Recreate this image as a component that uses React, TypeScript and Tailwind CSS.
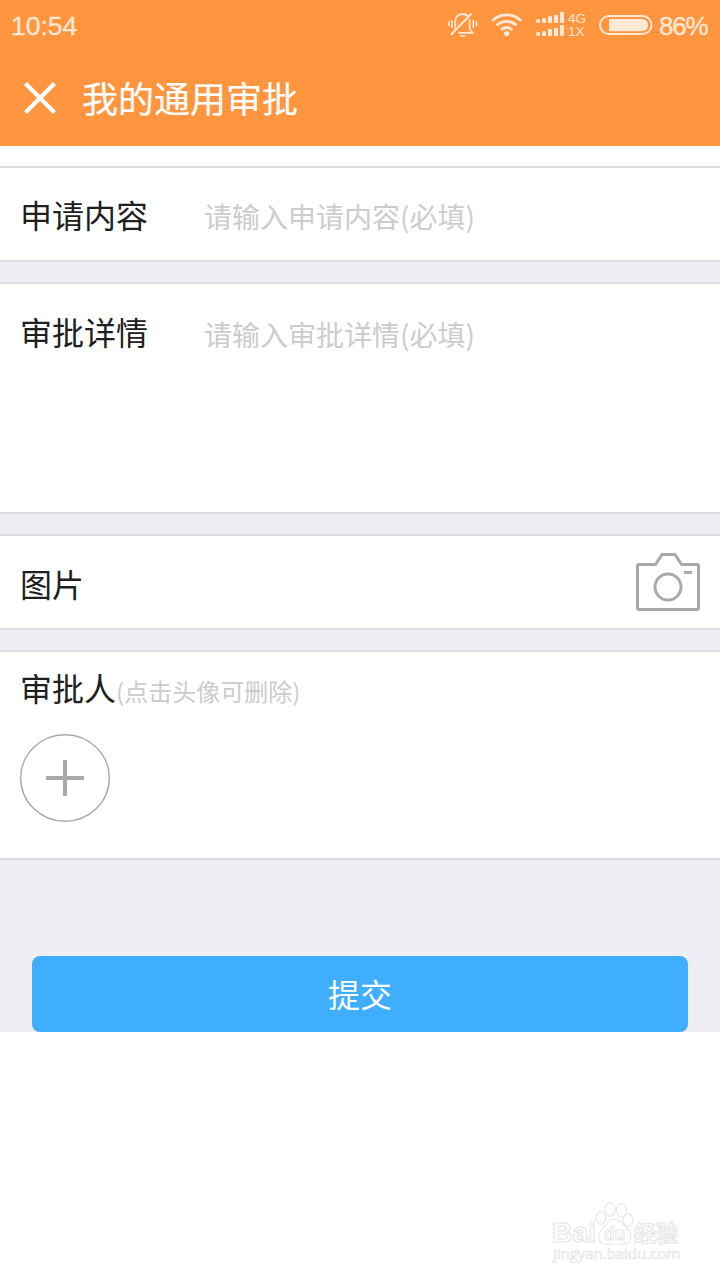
import type { ReactNode } from "react";

const cjk = "font-['Noto_Sans_CJK_SC',sans-serif]";

function MutedBell() {
  return (
    <svg className="block" width="30" height="26" viewBox="0 0 30 26" fill="none" stroke="#ffe8d6" strokeWidth="1.8">
      <path d="M.9 9.300v5M4 8v8M25.300 8v8M28.400 9.300v5" strokeWidth="1.600" />
      <path d="M7.200 16.500V9.500C7.200 5 10 2 14.600 2c2.300 0 4 .8 5.200 2" />
      <path d="M21.600 7v8.500c0 2.200 1 3.400 3 5.300H10.500" />
      <path d="M23.600 1.500L2.900 22.700" strokeWidth="2" />
      <path d="M11 23.200h7l-1.800 1.600h-3.400z" fill="#ffe8d6" stroke="none" />
    </svg>
  );
}

function Wifi() {
  return (
    <svg className="block" width="32" height="24" viewBox="0 0 32 24" fill="none" stroke="#ffe8d6" strokeWidth="2.900">
      <path d="M1.300 7.800C9.300-.1 22-.1 30 7.800" />
      <path d="M5.500 12.600C11 7 20.200 7 25.700 12.600" />
      <path d="M10 17c3.200-3.300 8.200-3.300 11.400 0" />
      <circle cx="15.700" cy="20.600" r="2.700" fill="#ffe8d6" stroke="none" />
    </svg>
  );
}

function SignalRow() {
  return (
    <svg className="block" width="29" height="12" viewBox="0 0 29 12" fill="#ffe8d6">
      <rect x="0" y="7" width="4" height="4" rx="1.500" />
      <rect x="6" y="6" width="4" height="5" rx="1" />
      <rect x="12" y="4" width="4" height="7" rx="1" />
      <rect x="18" y="2.700" width="4" height="8.300" rx="1" />
      <rect x="24" y="0" width="4" height="11" rx="1" />
    </svg>
  );
}

function Battery() {
  return (
    <svg className="block" width="54" height="22" viewBox="0 0 54 22">
      <rect x="1" y="2" width="51.500" height="18" rx="9" fill="none" stroke="#ffe8d6" strokeWidth="2" />
      <path d="M10 5h32.500q6.500 0 6.500 6.100t-6.500 6.100H10z" fill="#ffe8d6" />
    </svg>
  );
}

function StatusBar() {
  return (
    <div className="flex h-[50px] items-center pl-[11px] pr-[12px] font-['Liberation_Sans',sans-serif] text-[26.500px] leading-[30px] text-[#ffe8d6]">
      <span className="pt-[2px] [-webkit-text-stroke:0.300px_#ffe8d6]">10:54</span>
      <div className="ml-auto flex items-center">
        <MutedBell />
        <div className="ml-[13px]"><Wifi /></div>
        <div className="ml-[13px] flex flex-col gap-[1px] pb-[2px]">
          <SignalRow />
          <SignalRow />
        </div>
        <div className="ml-[3px] w-[20px] font-['Liberation_Sans',sans-serif] text-[13.500px] leading-[13px]">
          <div>4G</div>
          <div>1X</div>
        </div>
        <div className="ml-[11px]"><Battery /></div>
        <span className="ml-[6px] w-[49px] pt-[2px] text-[26px] tracking-[-1.200px] [-webkit-text-stroke:0.300px_#ffe8d6]">86%</span>
      </div>
    </div>
  );
}

function Panel({ className, children }: { className: string; children: ReactNode }) {
  return <section className={`flex border-y-2 border-[#dcdcdc] bg-white px-5 ${className}`}>{children}</section>;
}

function Field({ label, placeholder, offset }: { label: string; placeholder: string; offset: string }) {
  return (
    <>
      <span className="w-[184px] text-[32px] leading-[48px]">{label}</span>
      <span className={`text-[28px] leading-[48px] text-[#cccccc] ${offset}`}>{placeholder}</span>
    </>
  );
}

function Camera() {
  return (
    <svg width="64" height="58" viewBox="0 0 64 58" fill="none" stroke="#a9a9a9" strokeWidth="3">
      <path d="M3 11.500h16.500L26 1.500h13l6.500 10H61q1.500 0 1.500 1.500v42q0 1.500-1.500 1.500H3q-1.500 0-1.500-1.500V13q0-1.500 1.500-1.500z" />
      <circle cx="32" cy="34" r="13" />
      <path d="M48 19.500h8" />
    </svg>
  );
}

function Watermark() {
  return (
    <svg width="132" height="66" viewBox="0 0 132 66" fill="#ffffff" stroke="#e6e6e6" strokeWidth="1.100">
      <g fontFamily="Liberation Sans, sans-serif" fontWeight="bold">
        <text x="2" y="39.500" fontSize="28" textLength="44" lengthAdjust="spacingAndGlyphs">Bai</text>
        <text x="3" y="56.500" fontFamily="Open Sans, sans-serif" fontSize="14" fontWeight="normal" strokeWidth="0.700" textLength="127" lengthAdjust="spacingAndGlyphs">jingyan.baidu.com</text>
      </g>
      <ellipse cx="51" cy="16" rx="5" ry="6.300" />
      <ellipse cx="60" cy="7.500" rx="5" ry="6.800" />
      <ellipse cx="71.500" cy="8.500" rx="5" ry="6.800" />
      <ellipse cx="78" cy="18" rx="5" ry="6.300" />
      <path d="M64.500 17c-5 0-7 5-10.500 8.500-9 8-5 18.500 4 16.500h13c10 1 14-8.500 5-16.500-3.500-3.500-6-8.500-11.500-8.500z" />
      <text x="54" y="38" fontFamily="Liberation Sans, sans-serif" fontSize="18" fontWeight="bold" strokeWidth="0.900" textLength="21" lengthAdjust="spacingAndGlyphs">du</text>
      <text x="84" y="38.500" fontFamily="Noto Sans CJK SC, sans-serif" fontSize="22" fontWeight="bold">经验</text>
    </svg>
  );
}

export default function App() {
  return (
    <div className={`flex h-[1280px] w-[720px] flex-col overflow-hidden bg-white text-[#202020] ${cjk}`}>
      <header className="h-[146px] shrink-0 bg-[#ff953f]">
        <StatusBar />
        <div className="flex h-24 items-center pl-6">
          <svg width="32" height="32" viewBox="0 0 32 32" stroke="#ffffff" strokeWidth="4.200">
            <path d="M1.500 1.500l29 29M30.500 1.500l-29 29" />
          </svg>
          <h1 className="ml-[26px] pb-[3px] text-[36px] font-normal leading-[54px] text-white [-webkit-text-stroke:0.200px_white]">我的通用审批</h1>
        </div>
      </header>
      <main className="flex shrink-0 flex-col bg-white pt-5">
        <div className="flex h-[866px] flex-col gap-5 bg-[#efeef4]">
          <Panel className="h-24 items-center">
            <Field label="申请内容" placeholder="请输入申请内容(必填)" offset="pt-[3px]" />
          </Panel>
          <Panel className="h-[232px] items-start pt-[23px]">
            <Field label="审批详情" placeholder="请输入审批详情(必填)" offset="pt-[3px]" />
          </Panel>
          <Panel className="h-24 items-center justify-between">
            <span className="pt-[2px] text-[32px] leading-[48px]">图片</span>
            <Camera />
          </Panel>
          <Panel className="h-[210px] flex-col pt-[11px]">
            <div className="flex h-12 items-baseline leading-[48px]">
              <span className="text-[32px]">审批人</span>
              <span className="text-[24px] text-[#cccccc]">(点击头像可删除)</span>
            </div>
            <svg className="mt-[23px]" width="90" height="88" viewBox="0 0 90 88" fill="none" stroke="#a9a9a9">
              <ellipse cx="45" cy="44" rx="44.300" ry="43.300" strokeWidth="1.400" />
              <path d="M26 44h38M45 26v36" strokeWidth="4" />
            </svg>
          </Panel>
          <button className="mx-8 mt-[76px] h-[76px] rounded-lg bg-[#40aeff] pb-[3px] text-[32px] leading-[48px] text-white">提交</button>
        </div>
      </main>
      <footer className="flex grow items-end justify-end pb-[12px] pr-[38px]">
        <Watermark />
      </footer>
    </div>
  );
}
